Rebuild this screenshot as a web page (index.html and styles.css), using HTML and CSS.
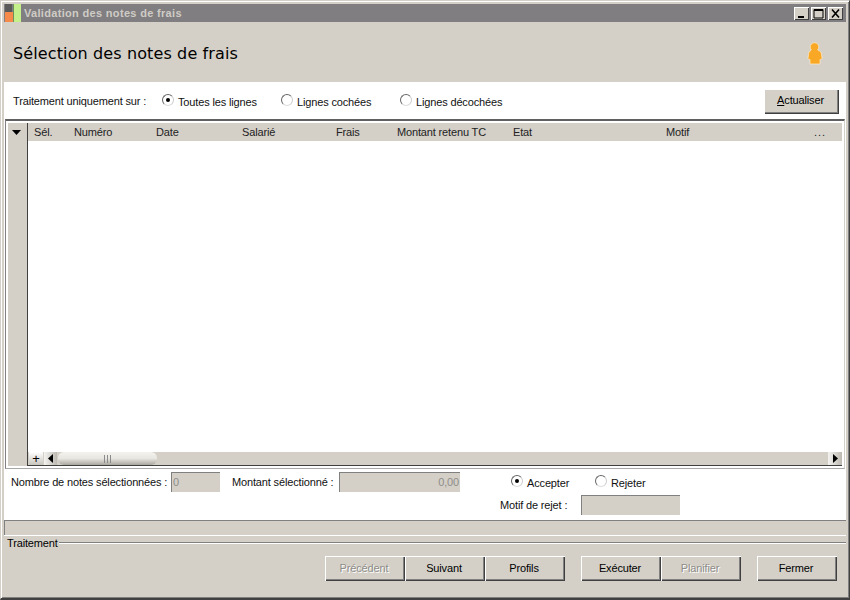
FILE: index.html
```html
<!DOCTYPE html>
<html lang="fr">
<head>
<meta charset="utf-8">
<title>Validation des notes de frais</title>
<link rel="stylesheet" href="styles.css">
</head>
<body>
<div class="window">
  <div class="titlebar">
    <svg class="app-icon" width="18" height="18" viewBox="0 0 18 18"><rect x="1" y="0" width="7" height="8" fill="#5a5a5a"/><rect x="1" y="8" width="8" height="10" fill="#f58a4a"/><rect x="9" y="0" width="1" height="18" fill="#6f8f5a"/><rect x="10" y="0" width="7" height="18" fill="#c4f08c"/></svg>
    <span class="title-text">Validation des notes de frais</span>
    <div class="win-btns">
      <span class="win-btn"><svg width="15" height="13" viewBox="0 0 15 13"><rect x="4" y="9" width="6" height="2" fill="#000"/></svg></span>
      <span class="win-btn"><svg width="15" height="13" viewBox="0 0 15 13"><path d="M3 2.500h9v8.500H3z M3 3.500h9" fill="none" stroke="#000"/></svg></span>
      <span class="win-btn"><svg width="15" height="13" viewBox="0 0 15 13"><path d="M4 2.500l7 8M11 2.500l-7 8" fill="none" stroke="#000" stroke-width="1.600"/></svg></span>
    </div>
  </div>
  <div class="header">
    <h1>Sélection des notes de frais</h1>
    <svg class="user-icon" width="18" height="23" viewBox="0 0 18 23"><g fill="#f9a825" stroke="#fdebc8" stroke-width="0.700"><path d="M5 8.500h7c2.500.5 3.500 2 3.500 4l.5 3.500c0 1-1 1.500-2 1.500V22H4v-4.500c-1 0-2-.5-2-1.500l.5-3.500c0-2 1-3.500 2.500-4z"/><circle cx="8.500" cy="5" r="4.300"/></g><path d="M5 8h7v2H5z" fill="#f9a825"/></svg>
  </div>
  <div class="panel">
    <div class="filter">
      <span class="filter-label">Traitement uniquement sur :</span>
      <label class="radio r1"><i class="dot on"></i>Toutes les lignes</label>
      <label class="radio r2"><i class="dot"></i>Lignes cochées</label>
      <label class="radio r3"><i class="dot"></i>Lignes décochées</label>
      <button class="btn refresh"><u>A</u>ctualiser</button>
    </div>
    <div class="grid">
      <div class="row-head"><svg width="10" height="5" viewBox="0 0 10 5"><path d="M0 0h9L4.500 5z" fill="#000"/></svg></div>
      <div class="grid-main">
        <div class="columns">
          <span>Sél.</span><span>Numéro</span><span>Date</span><span>Salarié</span><span>Frais</span><span>Montant retenu TC</span><span>Etat</span><span>Motif</span><span class="more">...</span>
        </div>
        <div class="rows"></div>
        <div class="hscroll">
          <span class="plus">+</span>
          <span class="arrow left"><svg width="6" height="9" viewBox="0 0 6 9"><path d="M5 0v9L0 4.500z" fill="#000"/></svg></span>
          <span class="thumb"><i></i></span>
          <span class="arrow right"><svg width="6" height="9" viewBox="0 0 6 9"><path d="M1 0v9l5-4.500z" fill="#000"/></svg></span>
        </div>
      </div>
    </div>
    <div class="fields">
      <div class="field-row">
        <span class="lbl-count">Nombre de notes sélectionnées :</span>
        <span class="input count">0</span>
        <span class="lbl-amount">Montant sélectionné :</span>
        <span class="input amount">0,00</span>
        <label class="radio accept"><i class="dot on"></i>Accepter</label>
        <label class="radio reject"><i class="dot"></i>Rejeter</label>
      </div>
      <div class="field-row second">
        <span class="lbl-reason">Motif de rejet :</span>
        <span class="input reason"></span>
      </div>
    </div>
  </div>
  <div class="status"></div>
  <div class="group">
    <div class="legend"><span>Traitement</span><i></i></div>
    <div class="actions">
      <button class="btn wide" disabled>Précédent</button>
      <button class="btn wide">Suivant</button>
      <button class="btn wide">Profils</button>
      <button class="btn wide sep">Exécuter</button>
      <button class="btn wide" disabled>Planifier</button>
      <button class="btn wide sep">Fermer</button>
    </div>
  </div>
</div>
</body>
</html>
```
FILE: styles.css
```css
* { box-sizing: border-box; }
html, body { margin: 0; padding: 0; }
body {
  width: 850px; height: 600px; overflow: hidden;
  background: #d4d0c8;
  font: 11px "Liberation Sans", Arial, sans-serif;
  letter-spacing: -0.15px;
  white-space: nowrap;
  color: #000;
}
.window {
  width: 850px; height: 600px;
  display: flex; flex-direction: column;
  background: #d4d0c8;
  border-top: 1px solid #d4d0c8;
  border-left: 1px solid #d4d0c8;
  border-right: 1px solid #404040;
  border-bottom: 2px solid #404040;
  box-shadow: inset 1px 1px 0 #fff, inset -1px -1px 0 #808080;
  padding: 3px 3px 0;
}
.titlebar {
  height: 18px; flex: none;
  background: #807e80;
  display: flex; align-items: center;
  color: #cfccc6;
}
.app-icon { flex: none; }
.title-text { margin-left: 2px; font-weight: bold; font-size: 11px; letter-spacing: 0.32px; }
.win-btns { margin-left: auto; margin-right: 3px; display: flex; gap: 2px; }
.win-btn {
  width: 15px; height: 13px; display: block;
  background: #d4d0c8;
  box-shadow: inset 1px 1px 0 #fff, inset -1px -1px 0 #404040;
}
.win-btn svg { display: block; }
.header {
  height: 60px; flex: none;
  display: flex; align-items: center; justify-content: space-between;
  padding: 2px 22px 0 9px;
}
.header h1 {
  margin: 0; font: normal 16px "DejaVu Sans", sans-serif;
  letter-spacing: 0.12px;
  color: #000;
}
.user-icon { margin-top: 1px; }
.panel { height: 438px; flex: none; background: #fff; display: flex; flex-direction: column; }
.filter {
  height: 37px; flex: none;
  display: flex; align-items: center;
  padding: 1px 7px 0 9px;
}
.filter-label { width: 149px; color: #111; }
.radio { display: flex; align-items: center; color: #111; padding-top: 1px; }
.dot {
  width: 12px; height: 12px; border-radius: 50%; flex: none;
  margin-right: 4px; margin-top: -4px;
  background: #fff;
  border: 1px solid;
  border-color: #666 #ccc #ddd #666;
  position: relative;
  display: block;
}
.dot.on::after {
  content: ""; position: absolute; left: 3px; top: 3px;
  width: 4px; height: 4px; border-radius: 50%; background: #000;
}
.r1 { width: 119px; }
.r2 { width: 119px; }
.btn {
  font: 11px "Liberation Sans", Arial, sans-serif;
  letter-spacing: -0.15px;
  color: #000;
  background: #d4d0c8;
  border: 0; padding: 0 2px 2px 0;
  box-shadow: inset 1px 1px 0 #fff, inset -1px -1px 0 #404040, inset -2px -2px 0 #808080;
}
.btn:disabled { color: #8f8d88; text-shadow: 1px 1px 0 #fff; }
.refresh { width: 75px; height: 25px; margin-left: auto; }
.grid {
  height: 350px; flex: none;
  display: flex;
  margin: 0 1px 0 1px;
  padding: 2px;
  border: solid;
  border-width: 2px 1px 1px 1px;
  border-color: #606060 #d4d0c8 #a8a8a8 #808080;
}
.row-head {
  width: 20px; flex: none;
  background: #d4d0c8;
  border-right: 1px solid #404040;
  padding: 7px 0 0 4px;
}
.row-head svg { display: block; }
.grid-main { flex: 1; display: flex; flex-direction: column; min-width: 0; }
.columns {
  height: 18px; flex: none;
  background: #d4d0c8;
  display: grid;
  grid-template-columns: 40px 82px 86px 94px 61px 116px 153px 148px 1fr;
  padding-left: 6px;
  align-items: center;
  color: #222;
}
.more { letter-spacing: 1px; }
.rows { flex: 1; background: #fff; }
.hscroll {
  height: 14px; flex: none;
  display: flex; align-items: stretch;
  background: #d4d0c8;
  border-bottom: 1px solid #404040;
}
.plus {
  width: 14px; margin-left: 1px;
  background: linear-gradient(#fff, #c8c5bd);
  text-align: center; line-height: 13px; font-size: 13px; color: #000;
}
.arrow {
  width: 13px; display: flex; align-items: center; justify-content: center;
  background: linear-gradient(90deg, #f4f3f0, #bcb9b1);
}
.arrow.left { margin-left: 1px; }
.arrow.right { margin-left: auto; width: 14px; }
.thumb {
  width: 99px; margin: 0 0 0 1px;
  border-radius: 6px;
  background: linear-gradient(#f4f3ef 0%, #e8e6e0 50%, #a9a69e 100%);
  display: flex; align-items: center; justify-content: center;
}
.thumb i { width: 7px; height: 8px; display: block; border: solid #8a8a8a; border-width: 0 1px; background: linear-gradient(90deg, transparent 2px, #8a8a8a 2px, #8a8a8a 3px, transparent 3px); }
.fields { flex: 1; padding-top: 3px; }
.field-row { display: flex; align-items: center; height: 20px; padding-left: 7px; color: #111; }
.input {
  height: 20px; display: block; flex: none;
  background: #d4d0c8;
  border-top: 1px solid #808080;
  border-left: 1px solid #808080;
  color: #8f8d88;
  line-height: 18px;
  padding: 0 1px;
}
.lbl-count { width: 160px; }
.count { width: 49px; }
.lbl-amount { margin-left: 12px; width: 107px; }
.amount { width: 121px; text-align: right; }
.accept { margin-left: 51px; width: 84px; }
.second { margin-top: 3px; }
.lbl-reason { margin-left: 489px; width: 81px; }
.reason { width: 99px; }
.status {
  height: 15px; flex: none;
  background: #d4d0c8;
  border-top: 1px solid #808080;
  border-left: 1px solid #808080;
}
.group { flex: 1; border-top: 1px solid #fff; }
.legend { display: flex; align-items: center; height: 14px; padding-left: 3px; }
.legend i { flex: 1; height: 2px; background: #808080; border-bottom: 1px solid #fff; margin-left: 1px; }
.actions { display: flex; padding: 6px 0 0 321px; }
.wide { width: 80px; height: 25px; }
.sep { margin-left: 16px; }
```
